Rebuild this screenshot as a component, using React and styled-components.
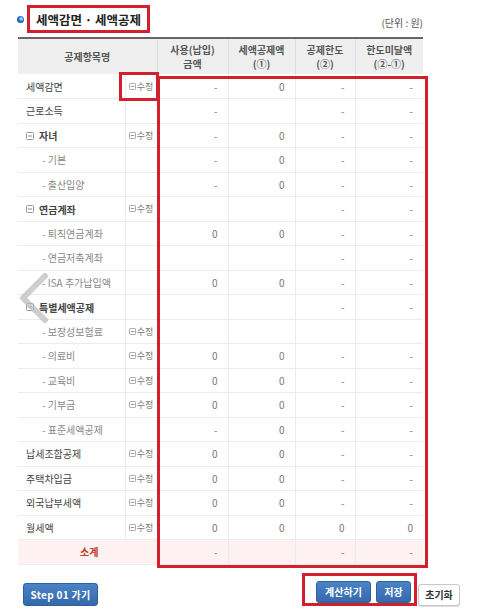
import styled, { createGlobalStyle } from "styled-components";

const GlobalStyle = createGlobalStyle`
  html, body {
    margin: 0;
    padding: 0;
    background: #fff;
  }
  body {
    font-family: "Noto Sans CJK KR", "Noto Sans", sans-serif;
    color: #444;
  }
  * {
    box-sizing: border-box;
  }
`;

const RED = "#d3202e";

const rows = [
  { name: "세액감면", edit: true, v: ["-", "0", "-", "-"] },
  { name: "근로소득", v: ["-", "", "-", "-"] },
  { name: "자녀", kind: "group", edit: true, v: ["-", "0", "-", "-"] },
  { name: "기본", kind: "sub", v: ["-", "0", "-", "-"] },
  { name: "출산입양", kind: "sub", v: ["-", "0", "-", "-"] },
  { name: "연금계좌", kind: "group", edit: true, v: ["", "", "-", "-"] },
  { name: "퇴직연금계좌", kind: "sub", v: ["0", "0", "-", "-"] },
  { name: "연금저축계좌", kind: "sub", v: ["", "", "-", "-"] },
  { name: "ISA 추가납입액", kind: "sub", v: ["0", "0", "-", "-"] },
  { name: "특별세액공제", kind: "group", v: ["", "", "-", "-"] },
  { name: "보장성보험료", kind: "sub", edit: true, v: ["", "", "", ""] },
  { name: "의료비", kind: "sub", edit: true, v: ["0", "0", "-", "-"] },
  { name: "교육비", kind: "sub", edit: true, v: ["0", "0", "-", "-"] },
  { name: "기부금", kind: "sub", edit: true, v: ["0", "0", "-", "-"] },
  { name: "표준세액공제", kind: "sub", v: ["-", "0", "-", "-"] },
  { name: "납세조합공제", edit: true, v: ["0", "0", "-", "-"] },
  { name: "주택차입금", edit: true, v: ["0", "0", "-", "-"] },
  { name: "외국납부세액", edit: true, v: ["0", "0", "-", "-"] },
  { name: "월세액", edit: true, v: ["0", "0", "0", "0"] },
];

const Page = styled.div`
  position: relative;
  width: 482px;
  height: 612px;
  padding: 5px 0 0 18px;
  overflow: hidden;
`;

const TitleRow = styled.div`
  display: flex;
  align-items: flex-end;
  justify-content: space-between;
  width: 406px;
  height: 28px;
  margin: 0 0 4px -1px;
`;

const TitleLeft = styled.div`
  display: flex;
  align-items: center;
  gap: 3px;
  height: 100%;
`;

const Bullet = styled.span`
  width: 7px;
  height: 7px;
  border-radius: 50%;
  background: radial-gradient(circle at 60% 40%, #9cc3ee 0 20%, #1d65b5 45%);
`;

const TitleBox = styled.div`
  display: flex;
  align-items: center;
  height: 28px;
  padding: 0 6px 0 6px;
  border: 3px solid ${RED};
  font-size: 12.5px;
  font-weight: 700;
  color: #222;
`;

const Unit = styled.span`
  font-size: 10px;
  line-height: 12px;
  color: #555;
  padding-bottom: 4px;
`;

const Table = styled.table`
  width: 405px;
  border-collapse: collapse;
  table-layout: fixed;
  border-top: 2px solid #666;
  border-bottom: 1px solid #d8d8d8;
`;

const Th = styled.th`
  height: 36px;
  background: #efefef;
  font-size: 10px;
  font-weight: 700;
  line-height: 14px;
  color: #555;
  padding: 0;
  border-left: ${(p) => (p.$first ? "none" : "1px solid #dcdcdc")};
`;

const Tr = styled.tr`
  height: 24.5px;
  background: ${(p) => (p.$total ? "#fdf1f1" : "#fff")};
`;

const Td = styled.td`
  padding: 0;
  border-bottom: 1px solid #ececec;
  border-left: ${(p) => (p.$first ? "none" : "1px solid #ececec")};
  font-size: 10px;
  white-space: nowrap;
  overflow: hidden;
`;

const NameCell = styled(Td)`
  padding-left: ${(p) => (p.$kind === "sub" ? "24px" : "8px")};
  color: ${(p) => (p.$kind === "sub" ? "#888" : "#444")};
  font-weight: ${(p) => (p.$kind === "group" ? 700 : 400)};
`;

const NameInner = styled.span`
  display: inline-flex;
  align-items: center;
  gap: 5px;
`;

const EditCell = styled(Td)`
  text-align: center;
  font-size: 9px;
  color: #777;
`;

const EditInner = styled.span`
  display: inline-flex;
  align-items: center;
  gap: 1px;
`;

const ValueCell = styled(Td)`
  text-align: right;
  padding-right: 10px;
  color: #777;
`;

const TotalLabel = styled(Td)`
  text-align: center;
  color: #c0392b;
  font-weight: 700;
  padding-left: 4px;
`;

const DataHighlight = styled.div`
  position: absolute;
  left: 157px;
  top: 76px;
  width: 271px;
  height: 492px;
  border: 3px solid ${RED};
  pointer-events: none;
`;

const EditHighlight = styled.div`
  position: absolute;
  left: 119px;
  top: 72px;
  width: 40px;
  height: 29px;
  border: 3px solid ${RED};
  pointer-events: none;
`;

const Chevron = styled.svg`
  position: absolute;
  left: 17px;
  top: 272px;
`;

const ButtonRow = styled.div`
  display: flex;
  align-items: flex-end;
  justify-content: space-between;
  width: 442px;
  margin-top: 8px;
`;

const Button = styled.button`
  height: 22px;
  width: ${(p) => p.$w}px;
  padding: 0;
  border-radius: 3px;
  font-family: inherit;
  font-size: 10px;
  font-weight: 700;
  cursor: pointer;
  border: 1px solid ${(p) => (p.$light ? "#c8c8c8" : "#2e5f9e")};
  background: ${(p) =>
    p.$light ? "#fff" : "linear-gradient(#4a83c6, #3469ab)"};
  color: ${(p) => (p.$light ? "#333" : "#fff")};
  box-shadow: ${(p) => (p.$light ? "0 1px 1px rgba(0,0,0,0.15)" : "none")};
`;

const StepButton = styled(Button)`
  height: 23px;
  margin: 0 0 0 5px;
  letter-spacing: 0.3px;
`;

const RightGroup = styled.div`
  display: flex;
  align-items: flex-end;
  gap: 1px;
`;

const HighlightGroup = styled.div`
  display: flex;
  gap: 5px;
  padding: 5px 3px 0 11px;
  border: 3px solid ${RED};
`;

function BoxIcon({ size = 7 }) {
  return (
    <svg width={size} height={size} viewBox="0 0 8 8">
      <rect x="0.5" y="0.5" width="7" height="7" rx="1" fill="#fff" stroke="#999" />
      <line x1="2" y1="4" x2="6" y2="4" stroke="#888" />
    </svg>
  );
}

function Row({ row }) {
  return (
    <Tr>
      <NameCell $first $kind={row.kind}>
        <NameInner>
          {row.kind === "group" && <BoxIcon size={8} />}
          {row.kind === "sub" ? `- ${row.name}` : row.name}
        </NameInner>
      </NameCell>
      <EditCell>
        {row.edit && (
          <EditInner>
            <BoxIcon />
            수정
          </EditInner>
        )}
      </EditCell>
      {row.v.map((val, i) => (
        <ValueCell key={i}>{val}</ValueCell>
      ))}
    </Tr>
  );
}

export default function App() {
  return (
    <>
      <GlobalStyle />
      <Page>
        <TitleRow>
          <TitleLeft>
            <Bullet />
            <TitleBox>세액감면 · 세액공제</TitleBox>
          </TitleLeft>
          <Unit>(단위 : 원)</Unit>
        </TitleRow>

        <Table>
          <colgroup>
            <col style={{ width: 107 }} />
            <col style={{ width: 32 }} />
            <col style={{ width: 71 }} />
            <col style={{ width: 67 }} />
            <col style={{ width: 60 }} />
            <col style={{ width: 68 }} />
          </colgroup>
          <thead>
            <tr>
              <Th $first colSpan={2}>공제항목명</Th>
              <Th>사용(납입)<br />금액</Th>
              <Th>세액공제액<br />(①)</Th>
              <Th>공제한도<br />(②)</Th>
              <Th>한도미달액<br />(②-①)</Th>
            </tr>
          </thead>
          <tbody>
            {rows.map((row) => (
              <Row key={row.name} row={row} />
            ))}
            <Tr $total>
              <TotalLabel $first colSpan={2}>소계</TotalLabel>
              <ValueCell>-</ValueCell>
              <ValueCell></ValueCell>
              <ValueCell>-</ValueCell>
              <ValueCell>-</ValueCell>
            </Tr>
          </tbody>
        </Table>

        <ButtonRow>
          <StepButton $w={75}>Step 01 가기</StepButton>
          <RightGroup>
            <HighlightGroup>
              <Button $w={55}>계산하기</Button>
              <Button $w={35}>저장</Button>
            </HighlightGroup>
            <Button $light $w={42}>초기화</Button>
          </RightGroup>
        </ButtonRow>

        <DataHighlight />
        <EditHighlight />
        <Chevron width="32" height="52" viewBox="0 0 32 52">
          <polyline
            points="28,4 6,26 28,48"
            fill="none"
            stroke="rgba(190,190,190,0.75)"
            strokeWidth="6"
            strokeLinecap="round"
            strokeLinejoin="round"
          />
        </Chevron>
      </Page>
    </>
  );
}
